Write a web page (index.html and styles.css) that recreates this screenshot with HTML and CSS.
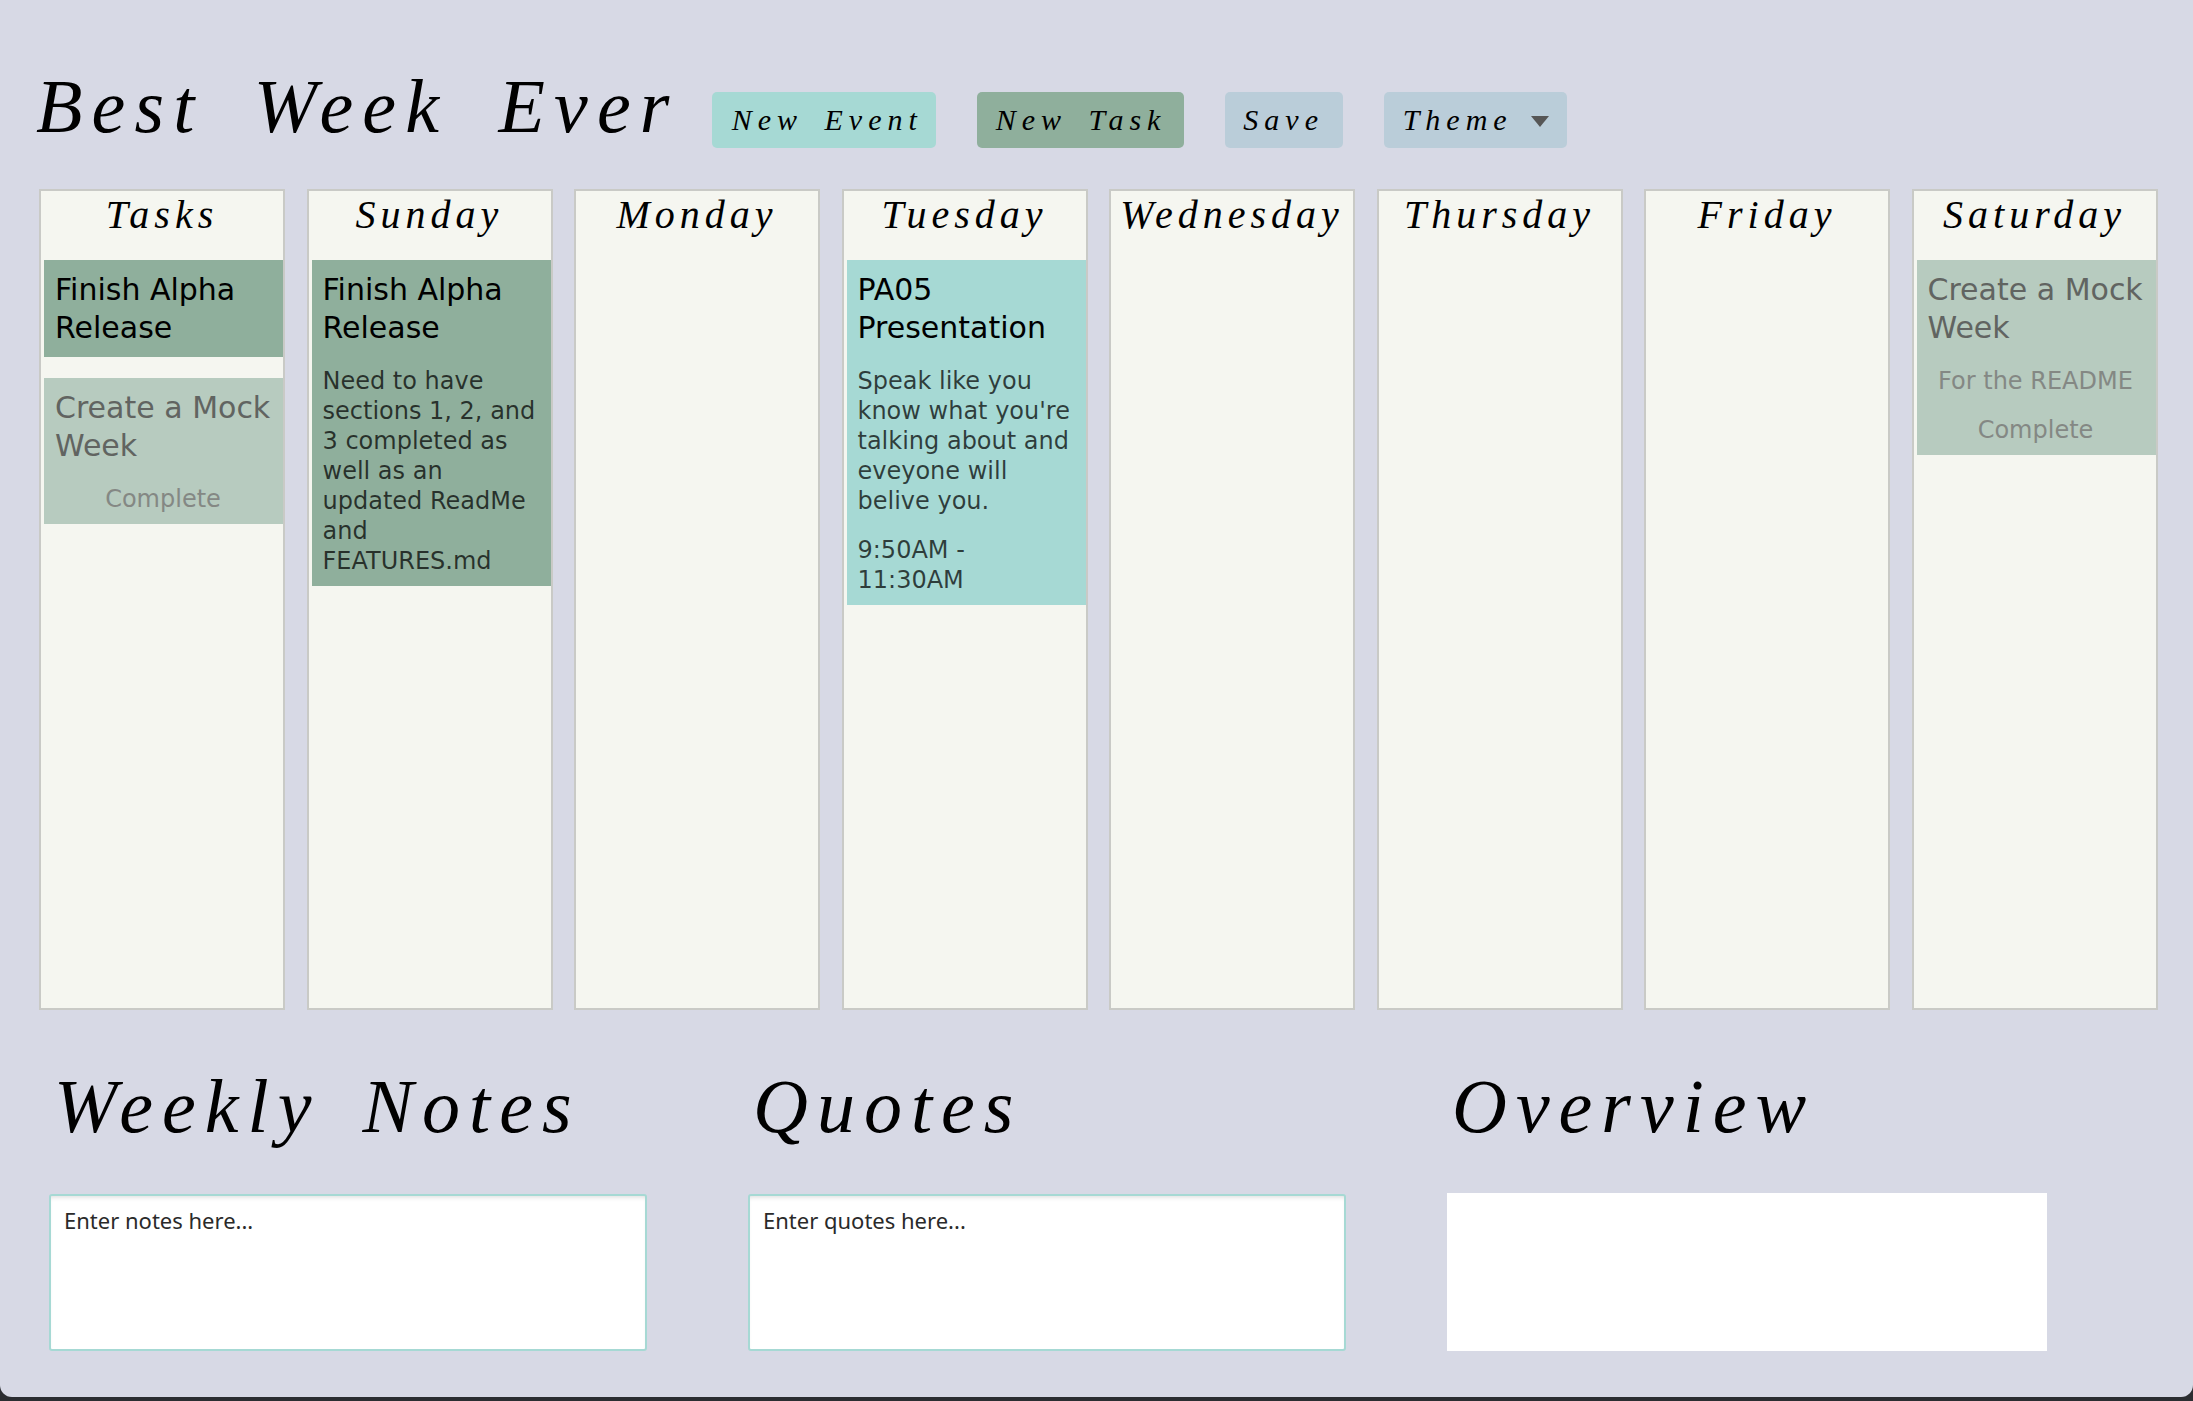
FILE: index.html
```html
<!DOCTYPE html>
<html lang="en">
<head>
<meta charset="utf-8">
<title>Best Week Ever</title>
<link rel="stylesheet" href="styles.css">
</head>
<body>
<div class="app">
  <header class="topbar">
    <h1 class="title">Best Week Ever</h1>
    <div class="actions">
      <button class="btn btn-event">New Event</button>
      <button class="btn btn-task">New Task</button>
      <button class="btn btn-plain">Save</button>
      <button class="btn btn-plain btn-theme">Theme <span class="caret"></span></button>
    </div>
  </header>

  <main class="week">
    <section class="col">
      <h2 class="col-head">Tasks</h2>
      <div class="card task">
        <h3 class="card-title">Finish Alpha Release</h3>
      </div>
      <div class="card done">
        <h3 class="card-title">Create a Mock Week</h3>
        <p class="card-line center">Complete</p>
      </div>
    </section>
    <section class="col">
      <h2 class="col-head">Sunday</h2>
      <div class="card task">
        <h3 class="card-title">Finish Alpha Release</h3>
        <p class="card-line">Need to have sections 1, 2, and 3 completed as well as an updated ReadMe and FEATURES.md</p>
      </div>
    </section>
    <section class="col">
      <h2 class="col-head">Monday</h2>
    </section>
    <section class="col">
      <h2 class="col-head">Tuesday</h2>
      <div class="card event">
        <h3 class="card-title">PA05 Presentation</h3>
        <p class="card-line">Speak like you know what you're talking about and eveyone will belive you.</p>
        <p class="card-line">9:50AM - 11:30AM</p>
      </div>
    </section>
    <section class="col">
      <h2 class="col-head">Wednesday</h2>
    </section>
    <section class="col">
      <h2 class="col-head">Thursday</h2>
    </section>
    <section class="col">
      <h2 class="col-head">Friday</h2>
    </section>
    <section class="col">
      <h2 class="col-head">Saturday</h2>
      <div class="card done">
        <h3 class="card-title">Create a Mock Week</h3>
        <p class="card-line center">For the README</p>
        <p class="card-line center">Complete</p>
      </div>
    </section>
  </main>

  <section class="bottom">
    <div class="panel">
      <h2 class="panel-head">Weekly Notes</h2>
      <textarea class="box" placeholder="Enter notes here..."></textarea>
    </div>
    <div class="panel">
      <h2 class="panel-head">Quotes</h2>
      <textarea class="box" placeholder="Enter quotes here..."></textarea>
    </div>
    <div class="panel">
      <h2 class="panel-head">Overview</h2>
      <div class="overview"></div>
    </div>
  </section>
</div>
</body>
</html>
```

FILE: styles.css
```css
html {
  background: #2b2d31;
}
body {
  margin: 0;
}
.app {
  background: #d7d9e5;
  height: 1397px;
  border-radius: 0 0 12px 12px;
  box-sizing: border-box;
  padding: 63px 0 0 36px;
  overflow: hidden;
}

.topbar {
  display: flex;
  align-items: flex-start;
}
.title {
  margin: 0;
  font-family: "Liberation Serif", serif;
  font-style: italic;
  font-weight: normal;
  font-size: 76px;
  line-height: 87px;
  letter-spacing: 9.2px;
  word-spacing: 22px;
  white-space: nowrap;
  color: #000;
}
.actions {
  display: flex;
  gap: 41px;
  margin: 29px 0 0 33px;
}
.btn {
  height: 56px;
  box-sizing: border-box;
  border: 0;
  border-radius: 5px;
  padding: 0 0 0 20px;
  font-family: "Liberation Serif", serif;
  font-style: italic;
  font-size: 30px;
  letter-spacing: 6px;
  word-spacing: 8px;
  white-space: nowrap;
  color: #000;
  display: flex;
  align-items: center;
}
.btn-event { background: #a6d9d4; width: 224px; }
.btn-task { background: #8faf9c; width: 207px; padding-left: 19px; }
.btn-plain { background: #bacdd9; width: 118px; justify-content: center; padding: 0; }
.btn-theme { width: 183px; justify-content: flex-start; padding: 0 18px 0 19px; }
.caret {
  width: 0;
  height: 0;
  border-left: 9px solid transparent;
  border-right: 9px solid transparent;
  border-top: 11px solid #565656;
  margin-left: auto;
  margin-top: 2px;
}

.week {
  display: grid;
  grid-template-columns: repeat(8, 246px);
  column-gap: 21.5px;
  margin: 39px 0 0 3px;
}
.col {
  height: 821px;
  box-sizing: border-box;
  border: 2px solid #c9cac6;
  background: #f5f6f0;
  padding: 1px 0 0 3px;
}
.col-head {
  margin: 0 0 22px -3px;
  height: 46px;
  text-align: center;
  font-family: "Liberation Serif", serif;
  font-style: italic;
  font-weight: normal;
  font-size: 40px;
  line-height: 46px;
  letter-spacing: 5px;
  color: #000;
}
.card {
  padding: 11px 12px 10px 11px;
  margin-bottom: 21px;
  font-family: "DejaVu Sans", Verdana, sans-serif;
}
.card.task { background: #8faf9c; }
.card.event { background: #a6d9d4; }
.card.done { background: #b7cbbf; }
.card-title {
  margin: 0;
  font-weight: normal;
  font-size: 30px;
  line-height: 38px;
  color: #000;
}
.card-line {
  margin: 19px 0 0;
  font-size: 24px;
  line-height: 30px;
  color: rgba(0, 0, 0, 0.72);
}
.card.done .card-title { color: #616461; }
.card.done .card-line { color: #848884; }
.center { text-align: center; }

.bottom {
  display: grid;
  grid-template-columns: repeat(3, 598px);
  column-gap: 101px;
  margin: 53px 0 0 13px;
}
.panel-head {
  margin: 0 0 44px 5px;
  font-family: "Liberation Serif", serif;
  font-style: italic;
  font-weight: normal;
  font-size: 76px;
  line-height: 87px;
  letter-spacing: 9px;
  word-spacing: 14px;
  white-space: nowrap;
  color: #000;
}
.box {
  display: block;
  width: 598px;
  height: 157px;
  box-sizing: border-box;
  border: 2px solid #a6d9d4;
  border-radius: 3px;
  background: #fff;
  box-shadow: inset 0 4px 5px -3px rgba(0, 0, 0, 0.15);
  padding: 9px 13px;
  resize: none;
  font-family: "Noto Sans", sans-serif;
  font-size: 22px;
  color: #222;
  outline: none;
}
.box::placeholder {
  color: #2a2a2a;
  opacity: 1;
}
.overview {
  width: 600px;
  height: 158px;
  margin-top: -1px;
  background: #fff;
}
```
